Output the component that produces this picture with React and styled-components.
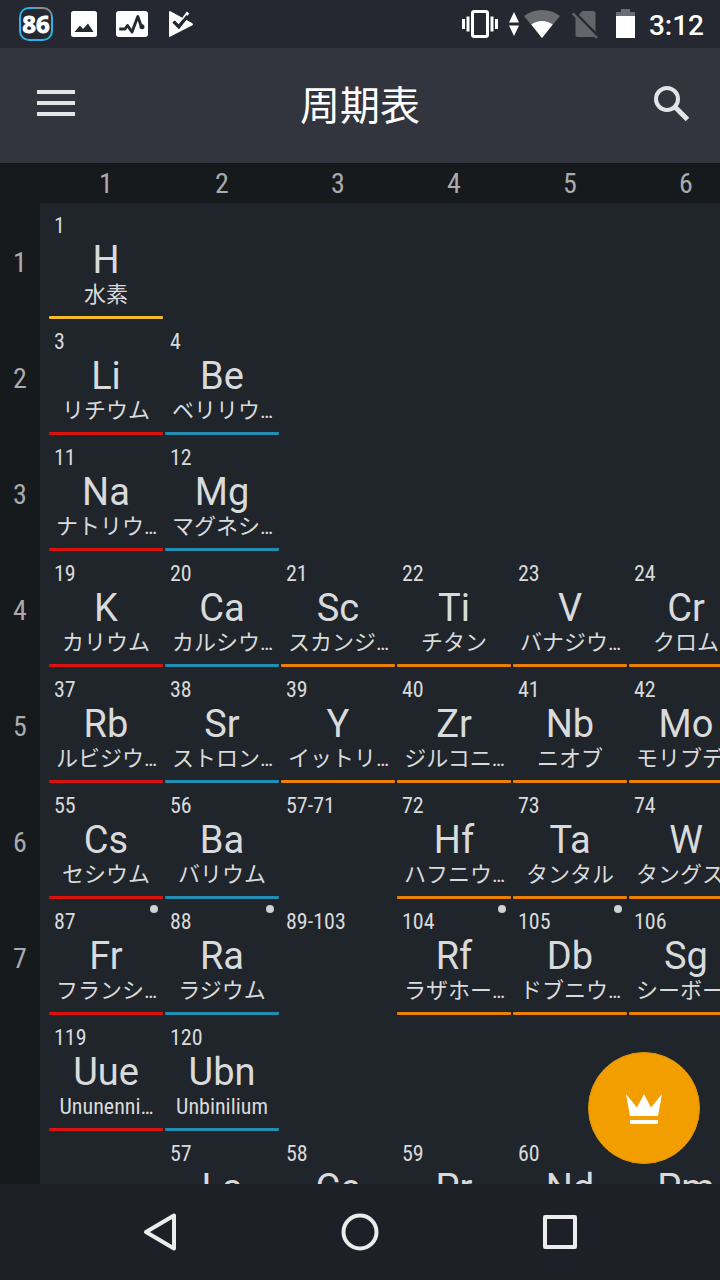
import React from 'react';
import styled, { createGlobalStyle } from 'styled-components';

const colors = {
  alkali: '#d9110f',
  alkaline: '#218db2',
  transition: '#ea7f04',
  nonmetal: '#f5ba2a',
};

const GlobalStyle = createGlobalStyle`
  * {
    box-sizing: border-box;
  }

  body {
    margin: 0;
    background: #20252b;
    overflow: hidden;
  }
`;

const Screen = styled.div`
  display: flex;
  flex-direction: column;
  position: relative;
  width: 720px;
  height: 1280px;
  overflow: hidden;
  font-family: Roboto, 'Noto Sans CJK JP', sans-serif;
  color: #d9dadb;
`;

const StatusBar = styled.div`
  display: flex;
  align-items: flex-start;
  flex: none;
  height: 48px;
  padding: 0 16px 0 19px;
  background: #252830;
`;

const StatusIcon = styled.svg`
  display: block;
  flex: none;
  width: ${props => props.$w}px;
  height: 48px;
  margin-left: ${props => props.$gap || 0}px;
`;

const BatteryBadge = styled.div`
  display: flex;
  justify-content: center;
  flex: none;
  width: 34px;
  height: 34px;
  margin-top: 7px;
  border: 2px solid transparent;
  border-radius: 10px;
  background: linear-gradient(#252830, #252830) padding-box,
    conic-gradient(#8c8c8e 0 55deg, #2fb0e6 55deg) border-box;
  color: #fff;
  font: 700 24px/29px 'Noto Sans', 'Open Sans', sans-serif;
  -webkit-text-stroke: 0.8px #fff;
`;

const Spacer = styled.div`
  flex: 1;
`;

const Clock = styled.span`
  margin-left: 14px;
  color: #fff;
  font-weight: 500;
  font-size: 28px;
  line-height: 51px;
`;

const Header = styled.header`
  display: flex;
  align-items: center;
  justify-content: space-between;
  flex: none;
  height: 115px;
  padding: 0 30px 0 37px;
  background: #32353e;
`;

const HeaderIcon = styled.svg`
  display: block;
  width: 38px;
  height: 38px;
  margin-bottom: 5px;
`;

const Title = styled.h1`
  margin: 3px 0 0 -7px;
  font-weight: 400;
  font-size: 40px;
  line-height: 60px;
  color: #fff;
`;

const Condensed = styled.span`
  font-family: 'Roboto Condensed', Roboto, 'Noto Sans CJK JP', sans-serif;
  font-stretch: 75%;
`;

const GroupRow = styled.div`
  display: flex;
  flex: none;
  height: 40px;
  padding-left: 48px;
  background: #171a1d;
  overflow: hidden;
`;

const GroupLabel = styled(Condensed)`
  flex: none;
  width: 116px;
  text-align: center;
  font-size: 28px;
  line-height: 41px;
  color: #a9abad;
`;

const Body = styled.div`
  display: flex;
  flex: 1;
  min-height: 0;
  overflow: hidden;
`;

const PeriodColumn = styled.div`
  flex: none;
  width: 40px;
  padding-top: 2px;
  background: #171a1d;
`;

const PeriodLabel = styled(Condensed)`
  display: block;
  height: 116px;
  text-align: center;
  font-size: 28px;
  line-height: 116px;
  color: #a9abad;
`;

const Table = styled.div`
  display: grid;
  grid-template-columns: repeat(6, 116px);
  grid-auto-rows: 116px;
  flex: 1;
  min-width: 0;
  padding: 1px 0 0 8px;
  background: #20252b;
  overflow: hidden;
`;

const Cell = styled.div`
  position: relative;
  grid-column: ${props => props.$col};
  grid-row: ${props => props.$row};
  display: flex;
  flex-direction: column;
  align-items: center;
  margin: 1px;
  padding-top: 8px;
  border-radius: 1px;

  &:after {
    content: '';
    width: 100%;
    height: 3px;
    margin-top: auto;
    border-radius: 1px;
    background: ${props => props.$color || 'transparent'};
  }
`;

const AtomicNumber = styled(Condensed)`
  align-self: flex-start;
  margin-left: 5px;
  font-size: 22px;
  line-height: 25px;
`;

const ElementSymbol = styled.span`
  margin-top: 2px;
  font-size: 38px;
  line-height: 40px;
  height: 40px;
`;

const Name = styled(Condensed)`
  height: 26px;
  margin-top: 1px;
  padding-left: ${props => (props.$truncated ? 1 : 0)}px;
  font-size: 22px;
  line-height: 28px;
  white-space: nowrap;
`;

const RadioactiveDot = styled.span`
  position: absolute;
  top: 4px;
  right: 5px;
  width: 8px;
  height: 8px;
  border-radius: 50%;
  background: #d0d1d3;
`;

const FloatingButton = styled.button`
  position: absolute;
  right: 20px;
  bottom: 116px;
  display: grid;
  place-items: center;
  width: 112px;
  height: 112px;
  padding: 0;
  border: 1px solid #dd9408;
  border-radius: 50%;
  background: #f39e00;
`;

const CrownIcon = styled.svg`
  display: block;
  width: 36px;
  height: 30px;
  margin-top: 2px;
`;

const NavBar = styled.nav`
  display: flex;
  align-items: center;
  justify-content: center;
  gap: 152px;
  flex: none;
  height: 96px;
  background: #1d2027;
`;

const NavIcon = styled.svg`
  display: block;
  width: 48px;
  height: 48px;
  fill: none;
  stroke: #ececec;
  stroke-width: 4;
  stroke-linejoin: round;
`;

const groups = [1, 2, 3, 4, 5, 6];
const periods = [1, 2, 3, 4, 5, 6, 7];

// row, column, number, symbol, name, category, radioactive
const elements = [
  [1, 1, '1', 'H', '水素', 'nonmetal'],
  [2, 1, '3', 'Li', 'リチウム', 'alkali'],
  [2, 2, '4', 'Be', 'ベリリウ…', 'alkaline'],
  [3, 1, '11', 'Na', 'ナトリウ…', 'alkali'],
  [3, 2, '12', 'Mg', 'マグネシ…', 'alkaline'],
  [4, 1, '19', 'K', 'カリウム', 'alkali'],
  [4, 2, '20', 'Ca', 'カルシウ…', 'alkaline'],
  [4, 3, '21', 'Sc', 'スカンジ…', 'transition'],
  [4, 4, '22', 'Ti', 'チタン', 'transition'],
  [4, 5, '23', 'V', 'バナジウ…', 'transition'],
  [4, 6, '24', 'Cr', 'クロム', 'transition'],
  [5, 1, '37', 'Rb', 'ルビジウ…', 'alkali'],
  [5, 2, '38', 'Sr', 'ストロン…', 'alkaline'],
  [5, 3, '39', 'Y', 'イットリ…', 'transition'],
  [5, 4, '40', 'Zr', 'ジルコニ…', 'transition'],
  [5, 5, '41', 'Nb', 'ニオブ', 'transition'],
  [5, 6, '42', 'Mo', 'モリブデ…', 'transition'],
  [6, 1, '55', 'Cs', 'セシウム', 'alkali'],
  [6, 2, '56', 'Ba', 'バリウム', 'alkaline'],
  [6, 3, '57-71'],
  [6, 4, '72', 'Hf', 'ハフニウ…', 'transition'],
  [6, 5, '73', 'Ta', 'タンタル', 'transition'],
  [6, 6, '74', 'W', 'タングス…', 'transition'],
  [7, 1, '87', 'Fr', 'フランシ…', 'alkali', true],
  [7, 2, '88', 'Ra', 'ラジウム', 'alkaline', true],
  [7, 3, '89-103'],
  [7, 4, '104', 'Rf', 'ラザホー…', 'transition', true],
  [7, 5, '105', 'Db', 'ドブニウ…', 'transition', true],
  [7, 6, '106', 'Sg', 'シーボー…', 'transition', true],
  [8, 1, '119', 'Uue', 'Ununenni…', 'alkali'],
  [8, 2, '120', 'Ubn', 'Unbinilium', 'alkaline'],
  [9, 2, '57', 'La'],
  [9, 3, '58', 'Ce'],
  [9, 4, '59', 'Pr'],
  [9, 5, '60', 'Nd'],
  [9, 6, '61', 'Pm'],
];

const Status = () => (
  <StatusBar>
    <BatteryBadge>86</BatteryBadge>
    <StatusIcon $w={26} $gap={18} viewBox="0 0 26 48">
      <rect y="11" width="26" height="26" rx="2.5" fill="#fff" />
      <path d="M3.5 32 L9 25.5 L12 29 L17 23.5 L22.5 32 Z" fill="#252830" />
    </StatusIcon>
    <StatusIcon $w={32} $gap={19} viewBox="0 0 32 48">
      <rect y="11" width="32" height="26" rx="3" fill="#fff" />
      <path
        d="M3.3 29 H9 L11.5 25.5 L16 32 L21.8 16.5 L25.5 27"
        fill="none"
        stroke="#252830"
        strokeWidth="2.9"
        strokeLinejoin="round"
      />
      <circle cx="26" cy="26.8" r="2.5" fill="#252830" />
    </StatusIcon>
    <StatusIcon $w={26} $gap={20} viewBox="0 0 26 48">
      <path
        d="M2 11 Q1 11 1 12.5 V36 Q1 37.5 2.5 36.5 L24 25.5 Q26 24.3 24 23 Z"
        fill="#fff"
      />
      <path d="M5.5 21.5 L10.8 26.8 L20.5 14.5" fill="none" stroke="#252830" strokeWidth="3" />
      <path d="M13 19.5 L18.2 12 L20.8 14 L15 21 Z" fill="#fff" transform="translate(0.5 -0.5)" />
      <path d="M5.8 21.8 L10.8 26.8 L19.5 16" fill="none" stroke="#252830" strokeWidth="2.8" />
    </StatusIcon>
    <Spacer />
    <StatusIcon $w={36} viewBox="0 0 36 48">
      <rect x="10.5" y="11.5" width="15" height="25" rx="1.8" fill="none" stroke="#fff" strokeWidth="3" />
      <path
        d="M0 19h3v10H0z M4.5 16.5h3v15h-3z M28.5 16.5h3v15h-3z M33 19h3v10h-3z"
        fill="#fff"
      />
    </StatusIcon>
    <StatusIcon $w={10} $gap={11} viewBox="0 0 10 48">
      <path d="M5 12 L10 22.5 H0 Z M0 25.5 H10 L5 36 Z" fill="#fff" />
    </StatusIcon>
    <StatusIcon $w={36} $gap={5} viewBox="0 0 36 48">
      <path d="M0 16 Q8 10 18 10 Q28 10 36 16 L18 38 Z" fill="#6a6c71" />
      <path d="M7.3 24.5 Q12 21 18 21 Q24 21 28.7 24.5 L18 38 Z" fill="#fff" />
    </StatusIcon>
    <StatusIcon $w={27} $gap={12} viewBox="0 0 27 48">
      <path d="M10.5 11 H21 Q23.5 11 23.5 13.5 V34.5 Q23.5 37 21 37 H6 Q3.5 37 3.5 34.5 V18 Z" fill="#63656a" />
      <path d="M2 12 L27 37" stroke="#252830" strokeWidth="3" />
      <path d="M0.7 13.3 L25 38" stroke="#63656a" strokeWidth="2.4" />
    </StatusIcon>
    <StatusIcon $w={19} $gap={17} viewBox="0 0 19 48">
      <path d="M5 9h9v3h5v4H0v-4h5z" fill="#6a6c71" />
      <path d="M0 16h19v22H0z" fill="#fff" />
    </StatusIcon>
    <Clock>3:12</Clock>
  </StatusBar>
);

const Element = ({ data }) => {
  const [row, col, number, symbol, name, category, radioactive] = data;
  return (
    <Cell $row={row} $col={col} $color={colors[category]}>
      <AtomicNumber>{number}</AtomicNumber>
      {symbol && <ElementSymbol>{symbol}</ElementSymbol>}
      {name && <Name $truncated={name.endsWith('…')}>{name}</Name>}
      {radioactive && <RadioactiveDot />}
    </Cell>
  );
};

const App = () => (
  <Screen>
    <GlobalStyle />
    <Status />
    <Header>
      <HeaderIcon viewBox="0 0 38 38">
        <path d="M0 6h38v4H0z M0 17h38v4H0z M0 28h38v4H0z" fill="#e3e4e5" />
      </HeaderIcon>
      <Title>周期表</Title>
      <HeaderIcon viewBox="0 0 38 38">
        <circle cx="15" cy="15" r="11" fill="none" stroke="#e3e4e5" strokeWidth="4" />
        <path d="M23 23 L35.5 35.5" stroke="#e3e4e5" strokeWidth="5" />
      </HeaderIcon>
    </Header>
    <GroupRow>
      {groups.map(group => (
        <GroupLabel key={group}>{group}</GroupLabel>
      ))}
    </GroupRow>
    <Body>
      <PeriodColumn>
        {periods.map(period => (
          <PeriodLabel key={period}>{period}</PeriodLabel>
        ))}
      </PeriodColumn>
      <Table>
        {elements.map(item => (
          <Element key={item[2]} data={item} />
        ))}
      </Table>
    </Body>
    <NavBar>
      <NavIcon viewBox="0 0 48 48">
        <path d="M38 7.5 V40.5 L10 24 Z" />
      </NavIcon>
      <NavIcon viewBox="0 0 48 48">
        <circle cx="24" cy="24" r="16.5" />
      </NavIcon>
      <NavIcon viewBox="0 0 48 48">
        <rect x="9" y="9" width="30" height="30" />
      </NavIcon>
    </NavBar>
    <FloatingButton>
      <CrownIcon viewBox="0 0 36 30">
        <path d="M0 0 L11 13.5 L18 0 L25 13.5 L36 0 L32 22 H4 Z" fill="#fff" />
        <path d="M4 26 H32 V28.5 Q32 30 30.5 30 H5.5 Q4 30 4 28.5 Z" fill="#fff" />
      </CrownIcon>
    </FloatingButton>
  </Screen>
);

export default App;
